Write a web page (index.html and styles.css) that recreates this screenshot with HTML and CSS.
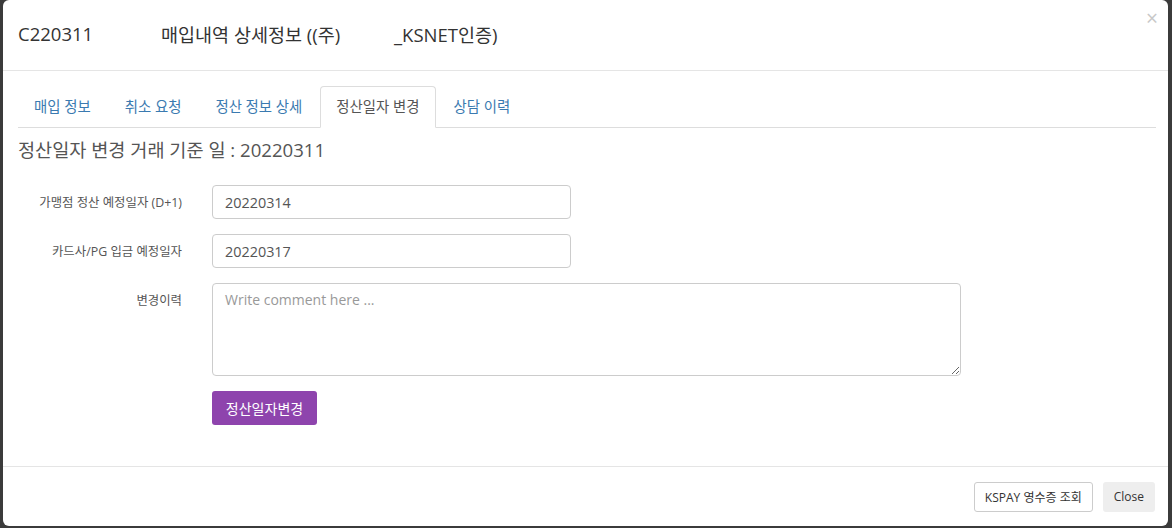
FILE: index.html
```html
<!DOCTYPE html>
<html lang="ko">
<head>
<meta charset="utf-8">
<title>매입내역 상세정보</title>
<link rel="stylesheet" href="styles.css">
</head>
<body>
<div class="backdrop">
  <div class="modal">
    <div class="modal-header">
      <h4 class="modal-title"><span class="t-code">C220311</span><span class="t-name">매입내역 상세정보 ((주)</span><span class="t-corp">_KSNET인증)</span></h4>
      <button class="close" type="button">×</button>
    </div>
    <div class="modal-body">
      <ul class="nav-tabs">
        <li class="tab"><a>매입 정보</a></li>
        <li class="tab"><a>취소 요청</a></li>
        <li class="tab"><a>정산 정보 상세</a></li>
        <li class="tab active"><a>정산일자 변경</a></li>
        <li class="tab"><a>상담 이력</a></li>
      </ul>
      <h3 class="section-title">정산일자 변경 거래 기준 일 : 20220311</h3>
      <div class="form">
        <div class="form-row">
          <label class="form-label">가맹점 정산 예정일자 (D+1)</label>
          <input class="form-control short" type="text" value="20220314">
        </div>
        <div class="form-row">
          <label class="form-label">카드사/PG 입금 예정일자</label>
          <input class="form-control short" type="text" value="20220317">
        </div>
        <div class="form-row">
          <label class="form-label">변경이력</label>
          <textarea class="form-control wide" placeholder="Write comment here ..."></textarea>
        </div>
        <div class="form-row">
          <span class="form-label"></span>
          <button class="btn btn-purple" type="button">정산일자변경</button>
        </div>
      </div>
    </div>
    <div class="modal-footer">
      <button class="btn btn-default" type="button">KSPAY 영수증 조회</button>
      <button class="btn btn-gray" type="button">Close</button>
    </div>
  </div>
</div>
</body>
</html>
```

FILE: styles.css
```css
* { box-sizing: border-box; }
html, body {
  margin: 0;
  padding: 0;
  height: 100%;
}
body {
  background: #3b3b3b;
  font-family: "Open Sans", "Noto Sans CJK KR", sans-serif;
  color: #333;
  overflow: hidden;
}
.backdrop {
  padding: 0 4px 0 3px;
  height: 528px;
}
.modal {
  background: #fff;
  height: 526px;
  border-radius: 6px;
  display: flex;
  flex-direction: column;
  position: relative;
}
.modal-header {
  height: 71px;
  border-bottom: 1px solid #e5e5e5;
  display: flex;
  align-items: center;
  padding: 0 15px 2px;
}
.modal-title {
  margin: 0;
  font-size: 18.5px;
  font-weight: 400;
  color: #333;
  display: flex;
}
.t-code { width: 143px; }
.t-name { width: 233px; }
.close {
  position: absolute;
  top: 8px;
  right: 10px;
  border: 0;
  background: none;
  font-size: 21px;
  color: #c8c8c8;
  font-family: "Open Sans", sans-serif;
  padding: 0;
  line-height: 1;
}
.modal-body {
  flex: 1;
  padding: 15px 12px 0 15px;
}
.nav-tabs {
  list-style: none;
  margin: 0;
  padding: 0;
  display: flex;
  border-bottom: 1px solid #ddd;
  height: 42px;
}
.tab {
  margin-right: 2px;
  margin-bottom: -1px;
}
.tab a {
  display: block;
  padding: 0 15px;
  height: 42px;
  line-height: 40px;
  font-size: 14.4px;
  color: #3a7ab0;
  border: 1px solid transparent;
  border-radius: 4px 4px 0 0;
}
.tab.active a {
  color: #555;
  background: #fff;
  border-color: #ddd #ddd transparent;
}
.section-title {
  margin: 9px 0 0;
  font-size: 18.6px;
  font-weight: 400;
  color: #555;
  line-height: 26px;
}
.form {
  margin-top: 22px;
  display: flex;
  flex-direction: column;
  gap: 15px;
}
.form-row {
  display: flex;
  align-items: flex-start;
}
.form-label {
  width: 194px;
  padding-right: 30px;
  text-align: right;
  font-size: 12.4px;
  color: #555;
  padding-top: 8px;
  flex: none;
}
.form-control {
  display: block;
  border: 1px solid #ccc;
  border-radius: 4px;
  font-family: "Open Sans", "Noto Sans CJK KR", sans-serif;
  font-size: 14.4px;
  color: #555;
  padding: 6px 12px;
  background: #fff;
}
.form-control.short {
  width: 359px;
  height: 34px;
}
.form-control.wide {
  width: 749px;
  height: 93px;
  resize: vertical;
  font-size: 14px;
}
.form-control::placeholder { color: #999; }
.btn {
  font-family: "Open Sans", "Noto Sans CJK KR", sans-serif;
  font-size: 13px;
  border-radius: 3px;
  border: 1px solid transparent;
  padding: 0 12px;
  cursor: pointer;
}
.btn-purple {
  background: #8e44ad;
  color: #fff;
  height: 34px;
  width: 105px;
  font-size: 14px;
  padding: 0;
}
.modal-footer {
  height: 60px;
  border-top: 1px solid #e5e5e5;
  display: flex;
  justify-content: flex-end;
  align-items: center;
  gap: 10px;
  padding: 0 13px 0 15px;
}
.btn-default {
  background: #fff;
  border-color: #ccc;
  color: #333;
  height: 30px;
  font-size: 12px;
  padding: 0 10px;
}
.btn-gray {
  background: #eee;
  color: #333;
  height: 30px;
  font-size: 12px;
  padding: 0 10px;
}
```
